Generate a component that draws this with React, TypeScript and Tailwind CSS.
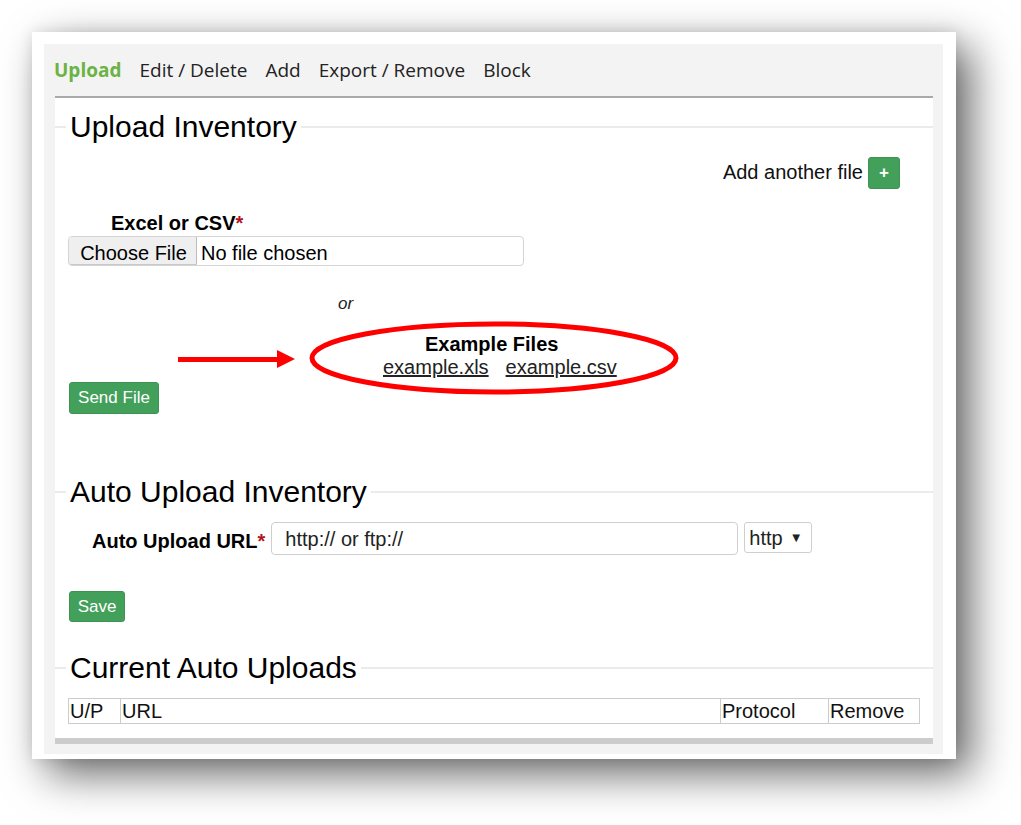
import React from "react";

const sans = { fontFamily: '"Liberation Sans", Arial, sans-serif' };

function Legend({ children }: { children: React.ReactNode }) {
  return (
    <div className="flex items-center h-[34px]">
      <div className="w-[11px] h-[2px] bg-[#ebebeb]" />
      <div className="ml-[4px] mr-[4px] text-[30px] leading-[34px] text-black whitespace-nowrap">{children}</div>
      <div className="flex-1 h-[2px] bg-[#ebebeb]" />
    </div>
  );
}

function GreenButton({ children, className }: { children: React.ReactNode; className?: string }) {
  return (
    <div
      className={
        "flex items-center justify-center bg-[#43a05b] border border-[#3d9452] rounded-[3px] text-white text-[17px] " +
        (className ?? "")
      }
    >
      {children}
    </div>
  );
}

export default function App() {
  return (
    <div className="relative w-[1021px] h-[825px] bg-white overflow-hidden" style={sans}>
      <div className="ml-[32px] mt-[32px] w-[924px] h-[727px] bg-white pt-[12px] pl-[12px] pr-[13px] pb-[5px] shadow-[15px_15px_40px_rgba(0,0,0,0.6),0_0_14px_rgba(0,0,0,0.1)]">
        <div className="h-full bg-[#f3f3f3] pl-[11px] pr-[10px] flex flex-col">
          {/* nav */}
          <div
            className="h-[52px] flex items-center gap-[18px] -ml-[1px] text-[19px] text-[#222]"
            style={{ fontFamily: '"Open Sans", "Liberation Sans", sans-serif' }}
          >
            <span className="font-bold text-[#6ab344]">Upload</span>
            <span>Edit / Delete</span>
            <span>Add</span>
            <span>Export / Remove</span>
            <span>Block</span>
          </div>
          {/* content */}
          <div className="border-t-2 border-[#a9a9a9] bg-white flex flex-col pt-[12px] pb-[14px] text-[20px] text-black">
            <Legend>Upload Inventory</Legend>
            <div className="mt-[13px] h-[32px] flex items-center justify-end pr-[33px]">
              <span className="leading-[22px] text-[#111] -mt-[2px]">Add another file</span>
              <GreenButton className="ml-[5px] w-[32px] h-[32px] font-bold text-[16px]">+</GreenButton>
            </div>
            <div className="mt-[23px] h-[22px] leading-[22px] ml-[56px] font-bold">
              Excel or CSV<span className="text-[#b0151b]">*</span>
            </div>
            <div className="mt-[2px] ml-[13px] w-[456px] h-[30px] border border-[#d4d4d4] rounded-[4px] flex items-center">
              <div className="h-[28px] w-[128px] bg-[#efefef] border-r border-[#bdbdbd] border-b border-b-[#c8c8c8] flex items-center justify-center leading-[22px] rounded-l-[3px] pt-[4px] pl-[2px]">
                Choose File
              </div>
              <span className="ml-[4px] leading-[22px] pt-[4px]">No file chosen</span>
            </div>
            <div className="mt-[27px] h-[20px] leading-[20px] ml-[283px] italic text-[17px] text-[#222] pt-[1px]">or</div>
            <div className="ml-[328px] flex flex-col">
              <div className="mt-[20px] h-[22px] leading-[22px] ml-[42px] font-bold">Example Files</div>
              <div className="mt-[1px] h-[22px] leading-[22px] flex gap-[17px] text-[#222]">
                <span className="underline">example.xls</span>
                <span className="underline">example.csv</span>
              </div>
            </div>
            <GreenButton className="mt-[4px] ml-[14px] w-[90px] h-[32px]">Send File</GreenButton>

            <div className="mt-[61px]">
              <Legend>Auto Upload Inventory</Legend>
            </div>
            <div className="mt-[13px] h-[33px] flex items-center ml-[37px]">
              <span className="font-bold leading-[22px] mt-[4px]">
                Auto Upload URL<span className="text-[#b0151b]">*</span>
              </span>
              <div className="ml-[6px] w-[467px] h-[33px] border border-[#cfcfcf] rounded-[4px] flex items-center pl-[13px] text-[#222] leading-[22px]">
                http:// or ftp://
              </div>
              <div className="ml-[6px] w-[68px] h-[31px] border border-[#cfcfcf] rounded-[3px] flex items-center pl-[4px] text-[#222] leading-[22px] self-start">
                <span>http</span>
                <span className="ml-[7px] text-[13px]">▼</span>
              </div>
            </div>
            <GreenButton className="mt-[36px] ml-[14px] w-[56px] h-[31px]">Save</GreenButton>

            <div className="mt-[29px]">
              <Legend>Current Auto Uploads</Legend>
            </div>
            <div className="mt-[13px] ml-[13px] w-[852px] h-[26px] border border-[#cccccc] flex text-[20px] leading-[24px] text-[#111]">
              <div className="w-[52px] border-r border-[#cccccc] pl-[1px]">U/P</div>
              <div className="w-[600px] border-r border-[#cccccc] pl-[1px]">URL</div>
              <div className="w-[108px] border-r border-[#cccccc] pl-[1px]">Protocol</div>
              <div className="flex-1 pl-[1px]">Remove</div>
            </div>
          </div>
          <div className="h-[6px] bg-[#cccccc]" />
        </div>
      </div>

      {/* annotation overlay */}
      <svg className="absolute left-0 top-0 pointer-events-none" width="1021" height="825" viewBox="0 0 1021 825">
        <ellipse cx="494" cy="358" rx="182" ry="34" fill="none" stroke="#ff0000" strokeWidth="5" />
        <rect x="178" y="357" width="102" height="5" fill="#ff0000" />
        <polygon points="277,350 295,359 277,368" fill="#ff0000" />
      </svg>
    </div>
  );
}
